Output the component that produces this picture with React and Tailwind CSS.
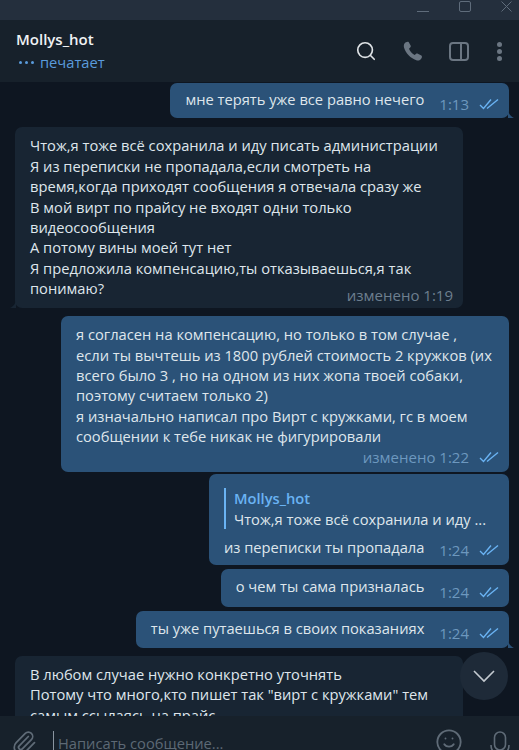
import { Paperclip, Smile, Search } from 'lucide-react';

const Checks = () => (
  <svg width="20" height="12" viewBox="0 0 20 12" fill="none" stroke="#6ab3f3" strokeWidth="1.4" className="shrink-0">
    <path d="M1 7l3.5 3.5L12 1.5" />
    <path d="M8 10.5L19 1.5" />
  </svg>
);

const Meta = ({ time, edited }) => (
  <div className="flex items-center gap-[10px] text-[#6d98bf] text-[15px] leading-[20px] whitespace-nowrap">
    <span>{edited && 'изменено '}{time}</span>
    <Checks />
  </div>
);

const Tail = ({ color }) => (
  <svg width="6" height="10" viewBox="0 0 6 10" className="absolute -right-[5px] bottom-0" fill={color}>
    <path d="M0 0C0 5 2 8 6 10H0Z" />
  </svg>
);

const Simple = ({ text, time, tail, first }) => (
  <div className={`relative shrink-0 bg-[#2b5278] rounded-[7px] mr-[10px] pl-[15px] pr-[10px] whitespace-nowrap ${first ? 'pt-[6px] pb-[9px]' : 'pt-[7px] pb-[10px]'}`}>
    <div className="flex items-end gap-[15px]">
      <span>{text}</span>
      <div className="translate-y-[5px]"><Meta time={time} /></div>
    </div>
    {tail && <Tail color="#2b5278" />}
  </div>
);

export default function App() {
  return (
    <div className="w-[519px] h-[750px] flex flex-col overflow-hidden bg-[#0e1621] text-[#dfe6ec] text-[14.7px] leading-[20.4px] font-['Open_Sans',sans-serif]">
      {/* title bar */}
      <div className="h-[20px] shrink-0 bg-[#242f3d] flex items-start justify-end gap-[30px] pr-[7px] overflow-hidden">
        <div className="w-[12px] h-px bg-[#5f6c7b] mt-[11px]" />
        <div className="w-[12px] h-[11px] mt-[1px] border border-[#5f6c7b] rounded-[2px]" />
        <svg width="11" height="11" viewBox="0 0 11 11" stroke="#5f6c7b" strokeWidth="1" className="mt-[1px]"><path d="M.5.5l10 10M10.500.5l-10 10" /></svg>
      </div>

      {/* header */}
      <div className="h-[62px] shrink-0 bg-[#17212b] flex items-center pl-[16px] pr-[17px]">
        <div className="flex-1">
          <div className="text-[15px] font-semibold text-[#f0f2f4] leading-[20px] -mt-[1px]">Mollys_hot</div>
          <div className="flex items-center text-[#5a9bdb] leading-[20px] mt-[3px]">
            <div className="flex gap-[3px] pl-[3px] pr-[6px]">
              <div className="w-[3px] h-[3px] rounded-full bg-[#5a9bdb]" />
              <div className="w-[3px] h-[3px] rounded-full bg-[#5a9bdb]" />
              <div className="w-[3px] h-[3px] rounded-full bg-[#5a9bdb]" />
            </div>
            <span>печатает</span>
          </div>
        </div>
        <div className="flex items-center">
          <Search size={22} className="text-[#dfe3e6] mr-[26px]" strokeWidth={1.8} />
          <svg width="20" height="20" viewBox="0 0 20 20" fill="#6b7682" className="mr-[26px]">
            <path d="M1.500 2.500C2.500 1 5 .2 5.800 1.200L7.600 4.600c.4.8.2 1.400-.4 2L6 7.800c.9 2.400 3 4.900 5.600 6.200l1.300-1.100c.6-.5 1.300-.6 2-.2l3.500 1.900c1 .6.6 2.500-.6 3.700-1 1-2.400 1.500-3.800 1.100C7.500 17.500 2.500 12 1 6.500.7 5 .8 3.500 1.500 2.500Z" />
          </svg>
          <div className="w-[20px] h-[19px] border-2 border-[#6b7682] rounded-[4px] flex justify-end mr-[28px]">
            <div className="w-[2px] h-full bg-[#6b7682] mr-[5px]" />
          </div>
          <div className="flex flex-col gap-[2px]">
            <div className="w-[5px] h-[5px] rounded-full bg-[#6b7682]" />
            <div className="w-[5px] h-[5px] rounded-full bg-[#6b7682]" />
            <div className="w-[5px] h-[5px] rounded-full bg-[#6b7682]" />
          </div>
        </div>
      </div>

      {/* messages */}
      <div className="relative flex-1 min-h-0 overflow-hidden pt-[1px] flex flex-col items-end">
        <Simple text="мне терять уже все равно нечего" time="1:13" tail first />

        <div className="self-start shrink-0 mt-[9px] ml-[15px] w-[448px] bg-[#182533] rounded-[7px] pl-[15px] pr-[10px] pt-[8px] pb-[3px] whitespace-nowrap relative">
          Чтож,я тоже всё сохранила и иду писать администрации<br />
          Я из переписки не пропадала,если смотреть на<br />
          время,когда приходят сообщения я отвечала сразу же<br />
          В мой вирт по прайсу не входят одни только<br />
          видеосообщения<br />
          А потому вины моей тут нет<br />
          Я предложила компенсацию,ты отказываешься,я так<br />
          понимаю?
          <div className="flex justify-end -mt-[14px] text-[#6d7f8f] text-[15px] leading-[20px]">изменено 1:19</div>
          <svg width="6" height="10" viewBox="0 0 6 10" className="absolute -left-[5px] bottom-0" fill="#182533">
            <path d="M6 0C6 5 4 8 0 10H6Z" />
          </svg>
        </div>

        <div className="shrink-0 relative mt-[8.600px] mr-[10px] w-[448px] bg-[#2b5278] rounded-[7px] pl-[15px] pr-[10px] pt-[8px] pb-[5px] whitespace-nowrap">
          я согласен на компенсацию, но только в том случае ,<br />
          если ты вычтешь из 1800 рублей стоимость 2 кружков (их<br />
          всего было 3 , но на одном из них жопа твоей собаки,<br />
          поэтому считаем только 2)<br />
          я изначально написал про Вирт с кружками, гс в моем<br />
          сообщении к тебе никак не фигурировали
          <div className="flex justify-end"><Meta time="1:22" edited /></div>
        </div>

        <div className="shrink-0 relative mt-[2px] mr-[10px] w-[300px] bg-[#2b5278] rounded-[7px] pl-[15px] pr-[10px] pt-[14px] pb-[8px] whitespace-nowrap">
          <div className="border-l-2 border-[#6ab3f3] pl-[8px] mb-[8px]">
            <div className="text-[#6ab3f3] font-semibold leading-[20px]">Mollys_hot</div>
            <div className="leading-[20px] mt-[1px]">Чтож,я тоже всё сохранила и иду ...</div>
          </div>
          <div className="flex items-end justify-between">
            <span>из переписки ты пропадала</span>
            <div className="translate-y-[3px]"><Meta time="1:24" /></div>
          </div>
        </div>

        <div className="shrink-0 mt-[4px]"><Simple text="о чем ты сама призналась" time="1:24" /></div>
        <div className="shrink-0 mt-[4px]"><Simple text="ты уже путаешься в своих показаниях" time="1:24" tail /></div>

        <div className="self-start shrink-0 mt-[8px] ml-[15px] w-[448px] bg-[#182533] rounded-[7px] pl-[15px] pr-[10px] pt-[8px] whitespace-nowrap">
          В любом случае нужно конкретно уточнять<br />
          Потому что много,кто пишет так "вирт с кружками" тем<br />
          самым ссылаясь на прайс
        </div>

        {/* scroll down button */}
        <div className="absolute right-[11px] bottom-[16px] w-[48px] h-[48px] rounded-full bg-[#1e2a38] flex items-center justify-center">
          <svg width="24" height="14" viewBox="0 0 24 14" fill="none" stroke="#c4cad0" strokeWidth="1.6"><path d="M2 2l10 10L22 2" /></svg>
        </div>
      </div>

      {/* input */}
      <div className="h-[34px] shrink-0 bg-[#17212b] flex items-start overflow-hidden">
        <Paperclip size={26} className="text-[#5f6b77] ml-[11px] mt-[14px]" strokeWidth={1.6} />
        <div className="w-px h-[24px] bg-[#8a95a0] ml-[16px] mt-[15px]" />
        <span className="text-[#5d6975] ml-[4px] mt-[17px]">Написать сообщение...</span>
        <Smile size={28} className="text-[#5f6b77] ml-auto mt-[12px]" strokeWidth={1.6} />
        <svg width="20" height="30" viewBox="0 0 20 30" fill="none" stroke="#5f6b77" strokeWidth="1.6" className="ml-[27px] mr-[9px] mt-[15px]">
          <rect x="4.500" y="1" width="11" height="18" rx="5.500" />
          <path d="M1 14c0 6 4 9.500 9 9.500s9-3.500 9-9.500M10 23.500V29" />
        </svg>
      </div>
    </div>
  );
}
